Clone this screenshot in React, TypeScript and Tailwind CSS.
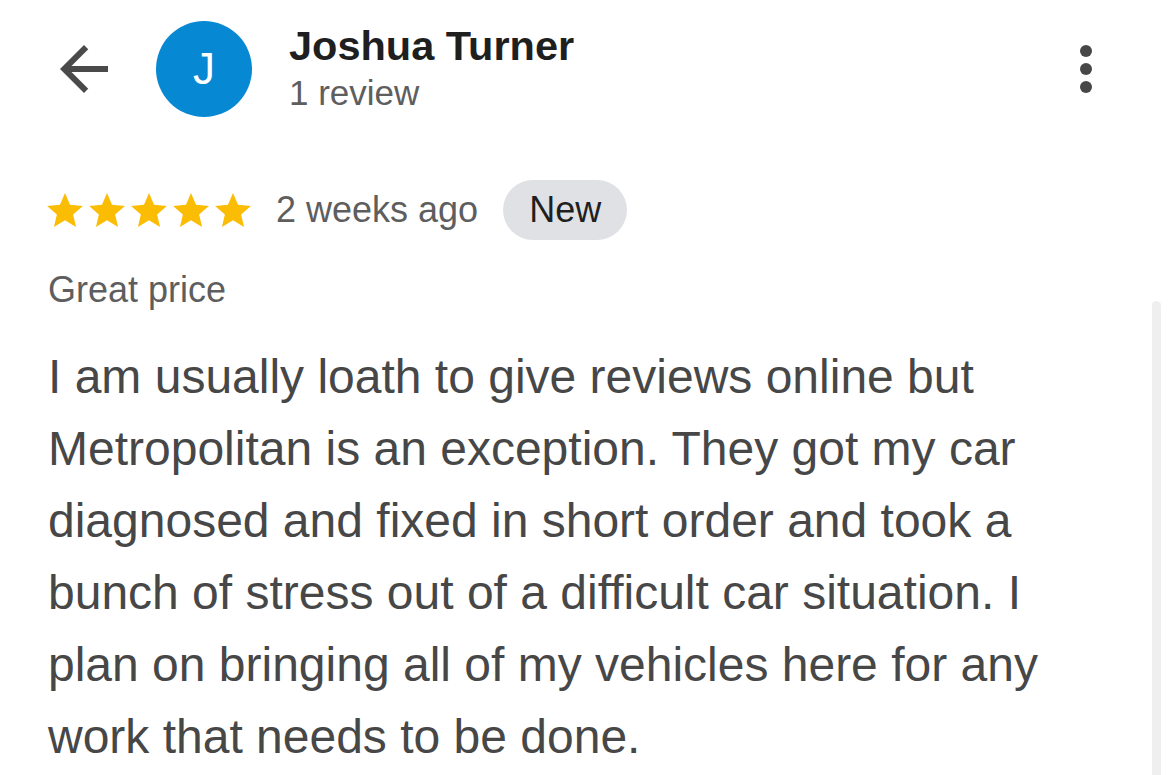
const REVIEW_TEXT =
  "I am usually loath to give reviews online but Metropolitan is an exception. They got my car diagnosed and fixed in short order and took a bunch of stress out of a difficult car situation. I plan on bringing all of my vehicles here for any work that needs to be done.";

function Star() {
  return (
    <svg width="36" height="34" viewBox="2 2 20 19" className="shrink-0">
      <path
        fill="#fbbc04"
        d="M12 17.27L18.18 21l-1.64-7.03L22 9.24l-7.19-.61L12 2 9.19 8.63 2 9.24l5.46 4.73L5.82 21z"
      />
    </svg>
  );
}

export default function App() {
  return (
    <div className="relative h-[775px] w-[1170px] overflow-hidden bg-white font-['Liberation_Sans',Arial,sans-serif]">
      {/* Header */}
      <header className="flex items-center pt-[21px] pr-[78px] pl-[48px]">
        <svg width="72" height="72" viewBox="0 0 24 24" className="shrink-0" aria-label="Back">
          <path fill="#4a4a4a" d="M20 11H7.83l5.59-5.59L12 4l-8 8 8 8 1.41-1.41L7.83 13H20v-2z" />
        </svg>
        <div className="ml-[36px] flex h-[96px] w-[96px] shrink-0 items-center justify-center rounded-full bg-[#0788d2] text-[44px] leading-none text-white">
          J
        </div>
        <div className="ml-[37px] flex flex-col">
          <span className="text-[41.5px] leading-[48px] font-bold text-[#1f1f1f]">Joshua Turner</span>
          <span className="text-[35px] leading-[46px] text-[#5e5e5e]">1 review</span>
        </div>
        <div className="ml-auto flex flex-col gap-[6px]" aria-label="More">
          <span className="h-[12px] w-[12px] rounded-full bg-[#474747]" />
          <span className="h-[12px] w-[12px] rounded-full bg-[#474747]" />
          <span className="h-[12px] w-[12px] rounded-full bg-[#474747]" />
        </div>
      </header>

      {/* Rating row */}
      <div className="mt-[63px] flex items-center pl-[47px]">
        <div className="flex items-center gap-[6px]">
          <Star />
          <Star />
          <Star />
          <Star />
          <Star />
        </div>
        <span className="ml-[25px] text-[36px] leading-[44px] text-[#5e5e5e]">2 weeks ago</span>
        <span className="ml-[25px] flex h-[60px] items-center rounded-full bg-[#dfe1e5] px-[26px] text-[36px] leading-[44px] text-[#1f1f1f]">
          New
        </span>
      </div>

      {/* Review */}
      <p className="mt-[28px] pl-[48px] text-[36px] leading-[44px] text-[#5e5e5e]">Great price</p>
      <p className="mt-[29px] w-[1110px] pl-[48px] text-[48px] leading-[72px] text-[#474747]">
        {REVIEW_TEXT}
      </p>

      {/* Scrollbar */}
      <div className="absolute top-[301px] right-[9px] h-[520px] w-[9px] rounded-full bg-[#efefef]" />
    </div>
  );
}
